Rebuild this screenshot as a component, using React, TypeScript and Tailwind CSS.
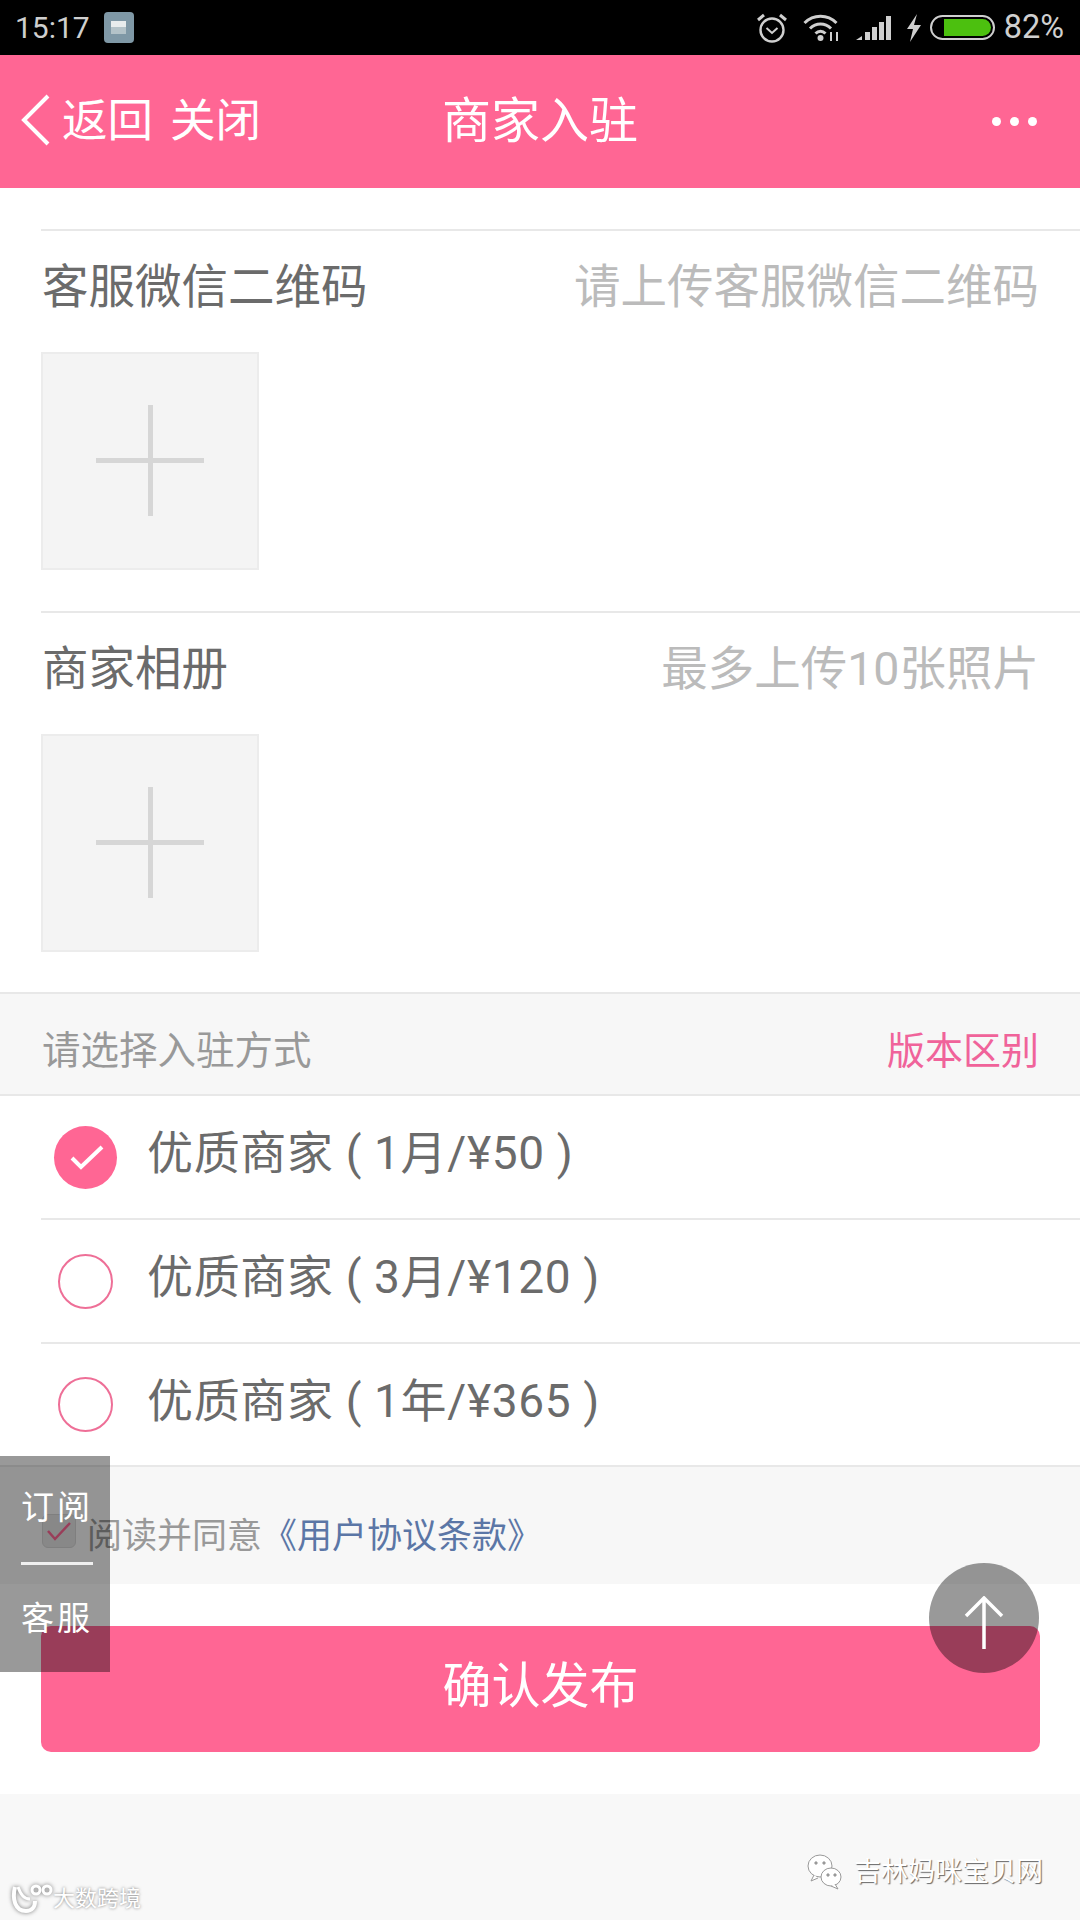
const font = "font-['Roboto','Noto_Sans_CJK_SC',sans-serif]";

function StatusIcons() {
  return (
    <div className="flex items-center text-[#cfcfcf]">
      {/* alarm */}
      <svg width="32" height="30" viewBox="0 0 32 30" fill="none" stroke="currentColor" strokeWidth="2.4" className="mr-[15px]">
        <circle cx="16" cy="17" r="11.5" />
        <path d="M10.5 15l5.5 5 5.5-5" strokeWidth="2" />
        <path d="M2 7l6-5M30 7l-6-5" strokeWidth="3" />
      </svg>
      {/* wifi */}
      <svg width="38" height="28" viewBox="0 0 38 28" fill="none" stroke="currentColor" className="mr-[15px]">
        <path d="M1.5 9C10.5 0 24.5 0 33.5 9" strokeWidth="3" />
        <path d="M7 14.5C13 8.5 22 8.5 28 14.5" strokeWidth="3" />
        <path d="M12.5 19.5C15.5 16.5 19.5 16.5 22.5 19.5" strokeWidth="3" />
        <circle cx="17.5" cy="24" r="3" fill="currentColor" stroke="none" />
        <path d="M28 18v9M34 18v9" strokeWidth="2" />
      </svg>
      {/* signal */}
      <svg width="36" height="24" viewBox="0 0 36 24" fill="currentColor" className="mr-[14px]">
        <path d="M0 24l6-4v4zM9 16h5v8H9zM16 11h5v13h-5zM23 6h5v18h-5zM30 0h5v24h-5z" />
      </svg>
      {/* charging */}
      <svg width="16" height="28" viewBox="0 0 16 28" fill="currentColor" className="mr-[8px]">
        <path d="M11 0L1 15h6l-3 13 11-17H8z" />
      </svg>
      {/* battery */}
      <div className="w-[65px] h-[25px] rounded-full border-2 border-[#cfcfcf] flex items-center pl-[12px] pr-[2px] mr-[9px]">
        <div className="w-[47px] h-[17px] rounded-r-full bg-[#4cc00f]" />
      </div>
      <span className="text-[32.5px] leading-none">82%</span>
    </div>
  );
}

function UploadBox() {
  return (
    <div className="mt-[30px] w-[218px] h-[218px] bg-[#f4f4f4] border-2 border-[#ececec] flex items-center justify-center">
      <svg width="108" height="111" viewBox="0 0 108 111" className="text-[#d6d6d6] mb-[2px]" fill="currentColor">
        <rect x="52" y="0" width="5" height="111" />
        <rect x="0" y="53" width="108" height="5" />
      </svg>
    </div>
  );
}

function UploadRow({ label, hint, height }: { label: string; hint: string; height: string }) {
  return (
    <div className={`ml-[41px] pr-[41px] border-t-2 border-[#e8e8e8] ${height}`}>
      <div className="flex items-center justify-between pl-[1px] pt-[21px] h-[91px]">
        <span className="text-[46.5px] leading-none text-[#6b6b6b]">{label}</span>
        <span className="text-[46.5px] leading-none text-[#bbb]">{hint}</span>
      </div>
      <UploadBox />
    </div>
  );
}

function PlanRow({ text, checked, height }: { text: string; checked?: boolean; height: string }) {
  return (
    <div className={`ml-[41px] flex items-center border-b-2 border-[#e8e8e8] last:border-b-0 ${height}`}>
      {checked ? (
        <div className="ml-[13px] w-[63px] h-[63px] rounded-full bg-[#ff6694] flex items-center justify-center">
          <svg width="34" height="26" viewBox="0 0 34 26" fill="none" stroke="white" strokeWidth="4" className="ml-[2px]">
            <path d="M2 14l9 9L32 3" />
          </svg>
        </div>
      ) : (
        <div className="ml-[17px] mr-[4px] w-[55px] h-[55px] rounded-full border-[2.5px] border-[#ee6f97]" />
      )}
      <span className="ml-[30px] pb-[8px] text-[46px] leading-none tracking-[0.65px] text-[#6b6b6b]">{text}</span>
    </div>
  );
}

export default function App() {
  return (
    <div className={`relative w-[1080px] h-[1920px] overflow-hidden bg-white ${font}`}>
      {/* Status bar */}
      <div className="h-[55px] bg-black flex items-center justify-between pl-[15px] pr-[16px]">
        <div className="flex items-center">
          <span className="text-[30px] leading-none text-[#cfcfcf]">15:17</span>
          <div className="ml-[14px] w-[30px] h-[31px] rounded-[4px] bg-[#7f98a6] flex flex-col items-center justify-center">
            <div className="w-[15px] h-[6px] bg-[#e8eced]" />
            <div className="w-[15px] h-[7px] bg-[#b3c2c8]" />
          </div>
        </div>
        <StatusIcons />
      </div>

      {/* Title bar */}
      <header className="relative h-[133px] bg-[#ff6694] flex items-center text-white">
        <svg width="30" height="52" viewBox="0 0 30 52" fill="none" stroke="white" strokeWidth="4" className="ml-[21px] shrink-0 mb-[3px]">
          <path d="M27 2L3 26l24 24" />
        </svg>
        <span className="ml-[11px] text-[45.5px] leading-none">返回</span>
        <span className="ml-[17px] text-[45.5px] leading-none">关闭</span>
        <h1 className="absolute left-0 right-0 text-center text-[49px] leading-none font-normal">商家入驻</h1>
        <div className="ml-auto mr-[43px] flex gap-[9px]">
          <span className="w-[9px] h-[9px] rounded-full bg-white" />
          <span className="w-[9px] h-[9px] rounded-full bg-white" />
          <span className="w-[9px] h-[9px] rounded-full bg-white" />
        </div>
      </header>

      <main className="pt-[41px]">
        <UploadRow label="客服微信二维码" hint="请上传客服微信二维码" height="h-[382px]" />
        <UploadRow label="商家相册" hint="最多上传10张照片" height="h-[381px]" />

        {/* Plan heading */}
        <div className="h-[104px] bg-[#f7f7f7] border-y-2 border-[#e8e8e8] flex items-center justify-between pl-[42px] pr-[41px] pt-[14px]">
          <span className="text-[38.5px] leading-none text-[#999]">请选择入驻方式</span>
          <span className="text-[38px] leading-none text-[#f0639a]">版本区别</span>
        </div>

        <div>
          <PlanRow text="优质商家 ( 1月/¥50 )" checked height="h-[124px]" />
          <PlanRow text="优质商家 ( 3月/¥120 )" height="h-[124px]" />
          <PlanRow text="优质商家 ( 1年/¥365 )" height="h-[121px]" />
        </div>

        {/* Agreement */}
        <div className="h-[119px] bg-[#f7f7f7] border-t-2 border-[#e8e8e8] flex items-center pl-[42px]">
          <div className="w-[34px] h-[34px] rounded-[6px] bg-[#e3e3e3] border border-[#d4d4d4] flex items-center justify-center mt-[10px]">
            <svg width="26" height="20" viewBox="0 0 26 20" fill="none" stroke="#ff6694" strokeWidth="2.5">
              <path d="M2 10l7 8L24 2" />
            </svg>
          </div>
          <span className="ml-[11px] pt-[22px] text-[35px] leading-none text-[#999]">阅读并同意</span>
          <span className="pt-[22px] text-[35px] leading-none text-[#5b76a6]">《用户协议条款》</span>
        </div>

        {/* Submit */}
        <div className="h-[210px] pt-[42px] px-[41px]">
          <button className="w-[999px] h-[126px] pb-[6px] rounded-[10px] bg-[#ff6694] text-white text-[49px] leading-none">
            确认发布
          </button>
        </div>

        <div className="h-[126px] bg-[#f8f8f8]" />
      </main>

      {/* Floating side menu */}
      <div className="absolute left-0 top-[1456px] w-[110px] h-[216px] bg-black/40 text-white flex flex-col items-center">
        <span className="mt-[35px] ml-[4px] text-[33px] leading-none tracking-[3px]">订阅</span>
        <div className="mt-[38px] ml-[3px] w-[72px] h-[3px] bg-white/85" />
        <span className="mt-[37px] ml-[4px] text-[33px] leading-none tracking-[3px]">客服</span>
      </div>

      {/* Back to top */}
      <div className="absolute left-[929px] top-[1563px] w-[110px] h-[110px] rounded-full bg-black/40 flex items-center justify-center">
        <svg width="40" height="54" viewBox="0 0 40 54" fill="none" stroke="white" strokeWidth="3.5" className="mt-[10px]">
          <path d="M20 53V2M2 20L20 2l18 18" />
        </svg>
      </div>

      {/* Watermarks */}
      <div className="absolute left-[10px] top-[1884px] flex items-center text-white [text-shadow:0_0_3px_#777]">
        <svg width="44" height="30" viewBox="0 0 44 30" fill="none" stroke="#fff" strokeWidth="4" className="drop-shadow-[0_0_2px_#777]">
          <path d="M5 3c-3 12 0 24 11 24 6 0 9-4 9-10" />
          <path d="M8 3c3 8 6 12 12 12" strokeWidth="3" />
          <circle cx="26" cy="6" r="4" strokeWidth="3" />
          <circle cx="37" cy="6" r="4" strokeWidth="3" />
        </svg>
        <span className="-ml-[1px] text-[22px] leading-none">大数跨境</span>
      </div>
      <div className="absolute left-[806px] top-[1853px] flex items-center text-white [text-shadow:1px_1px_1px_#666]">
        <svg width="36" height="38" viewBox="0 0 36 38" fill="#fff" stroke="#999" strokeWidth="1">
          <ellipse cx="14" cy="13" rx="12" ry="11" />
          <ellipse cx="25" cy="24" rx="10" ry="9" />
          <path d="M8 22l-3 6 7-3M29 31l3 5-7-3" />
          <circle cx="10" cy="10" r="1.2" fill="#999" />
          <circle cx="18" cy="10" r="1.2" fill="#999" />
          <circle cx="22" cy="22" r="1.2" fill="#999" />
          <circle cx="29" cy="22" r="1.2" fill="#999" />
        </svg>
        <span className="ml-[12px] text-[27px] leading-none">吉林妈咪宝贝网</span>
      </div>
    </div>
  );
}
